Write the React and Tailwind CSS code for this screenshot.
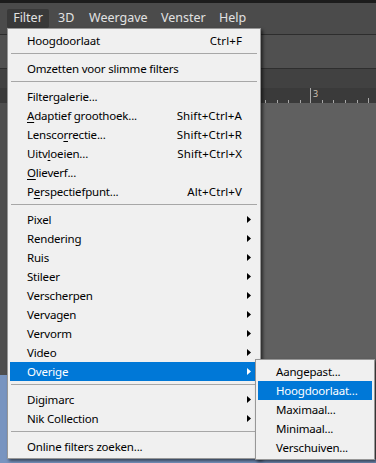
import React from "react";

const Arrow = ({ white }) => (
  <svg width="4" height="7" viewBox="0 0 4 7" className="block">
    <polygon points="0,0 4,3.5 0,7" fill={white ? "#ffffff" : "#000000"} />
  </svg>
);

const Item = ({ children, shortcut, arrow, active }) => (
  <div
    className={
      "h-[19px] flex items-center pl-[17px] " +
      (arrow ? "pr-[7px] " : "pr-[16px] ") +
      (active ? "bg-[#0078d7] text-white" : "text-black")
    }
  >
    <span className="whitespace-nowrap">{children}</span>
    {shortcut && (
      <span className="ml-auto whitespace-nowrap tracking-[0.1px]">{shortcut}</span>
    )}
    {arrow && (
      <span className="ml-auto">
        <Arrow white={active} />
      </span>
    )}
  </div>
);

const Sep = () => (
  <div className="h-[9px] pt-[3px] px-px">
    <div className="h-px bg-[#a7a7a7]" />
  </div>
);

const U = ({ children }) => (
  <span className="underline underline-offset-[2px] decoration-1">{children}</span>
);

const Sub = ({ children, active }) => (
  <div
    className={
      "h-[19px] flex items-center pl-[18px] whitespace-nowrap " +
      (active ? "bg-[#0078d7] text-white" : "text-black")
    }
  >
    {children}
  </div>
);

export default function App() {
  const ticks = [265, 277, 288, 300, 322, 333, 345, 357];
  return (
    <div className="relative w-[376px] h-[463px] overflow-hidden bg-[#606060] font-['Noto_Sans',sans-serif] text-[11.5px] tracking-[-0.2px] leading-none flex flex-col">
      <div className="h-[3px] bg-[#1c1c1c]" />
      {/* Menu bar */}
      <div className="h-[31px] bg-[#4b4b4b] flex items-center pl-[7px] text-[#e2e2e2] text-[12.5px] tracking-normal">
        <div className="w-[42px] h-[19px] bg-[#393939] rounded-[2px] flex items-center justify-center">
          Filter
        </div>
        <span className="ml-[9px] w-[31px]">3D</span>
        <span className="w-[72px]">Weergave</span>
        <span className="w-[58px]">Venster</span>
        <span>Help</span>
      </div>
      <div className="h-px bg-[#2d2d2d]" />
      {/* Options bar */}
      <div className="h-[33px] bg-[#505050]" />
      <div className="h-px bg-[#2e2e2e]" />
      {/* Tabs bar */}
      <div className="h-[19px] bg-[#414141]" />
      {/* Ruler */}
      <div className="h-[15px] bg-[#3a3a3a]">
        <svg width="376" height="15" className="block">
          <line x1="310.5" y1="0" x2="310.5" y2="15" stroke="#a8a8a8" strokeWidth="1" />
          {ticks.map((x) => (
            <line key={x} x1={x + 0.5} y1="12" x2={x + 0.5} y2="15" stroke="#a8a8a8" strokeWidth="1" />
          ))}
          <line x1="368.5" y1="10" x2="368.5" y2="15" stroke="#a8a8a8" strokeWidth="1" />
          <text x="313" y="9" fontSize="9" fill="#d0c4b4" fontFamily="Noto Sans, sans-serif">3</text>
        </svg>
      </div>
      {/* Work area */}
      <div className="flex-1 flex">
        <div className="w-[7px] flex flex-col">
          <div className="flex-1 bg-[#4e4e4e]" />
          <div className="h-[88px] bg-[#7894c0]" />
        </div>
        <div className="flex-1 flex flex-col">
          <div className="flex-1 bg-[#606060]" />
          <div className="h-[4px] bg-[#7894c0]" />
        </div>
      </div>

      {/* Main Filter menu */}
      <div className="absolute left-[7px] top-[28px] w-[254px] bg-[#f0f0f0] border border-[#979797] p-[2px] shadow-[2px_2px_3px_rgba(0,0,0,0.55)]">
        <Item shortcut="Ctrl+F">Hoogdoorlaat</Item>
        <Sep />
        <Item>Omzetten voor slimme filters</Item>
        <Sep />
        <Item>Filtergalerie...</Item>
        <Item shortcut="Shift+Ctrl+A">
          <U>A</U>daptief groothoek...
        </Item>
        <Item shortcut="Shift+Ctrl+R">
          Lensco<U>r</U>rectie...
        </Item>
        <Item shortcut="Shift+Ctrl+X">
          Uitv<U>l</U>oeien...
        </Item>
        <Item>
          <U>O</U>lieverf...
        </Item>
        <Item shortcut="Alt+Ctrl+V">
          P<U>e</U>rspectiefpunt...
        </Item>
        <Sep />
        <Item arrow>Pixel</Item>
        <Item arrow>Rendering</Item>
        <Item arrow>Ruis</Item>
        <Item arrow>Stileer</Item>
        <Item arrow>Verscherpen</Item>
        <Item arrow>Vervagen</Item>
        <Item arrow>Vervorm</Item>
        <Item arrow>Video</Item>
        <Item arrow active>Overige</Item>
        <Sep />
        <Item arrow>Digimarc</Item>
        <Item arrow>Nik Collection</Item>
        <Sep />
        <Item>Online filters zoeken...</Item>
      </div>

      {/* Submenu */}
      <div className="absolute left-[255px] top-[359px] w-[120px] bg-[#f0f0f0] border border-[#979797] p-[2px] shadow-[2px_2px_3px_rgba(0,0,0,0.55)]">
        <Sub>Aangepast...</Sub>
        <Sub active>Hoogdoorlaat...</Sub>
        <Sub>Maximaal...</Sub>
        <Sub>Minimaal...</Sub>
        <Sub>Verschuiven...</Sub>
      </div>
    </div>
  );
}
